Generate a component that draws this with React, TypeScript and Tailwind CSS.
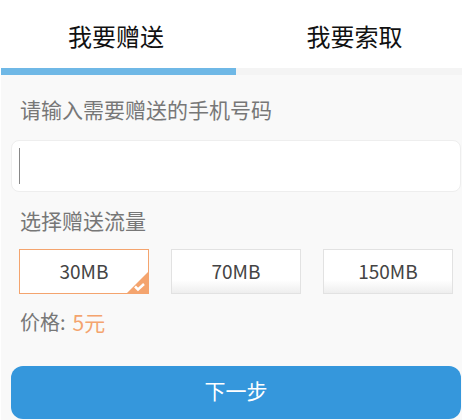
const font = { fontFamily: '"Noto Sans CJK SC", sans-serif' };

const plans = ['30MB', '70MB', '150MB'];

function PlanBox({ label, active }: { label: string; active: boolean }) {
  return (
    <div
      className={`relative flex h-[45px] w-[130px] items-center justify-center border text-[19px] text-[#444] ${
        active
          ? 'border-[#f4a46e] bg-white'
          : 'border-[#e2e2e2] bg-gradient-to-b from-white from-70% to-[#eeeeee]'
      }`}
    >
      {label}
      {active && (
        <svg className="absolute bottom-0 right-0 h-[21px] w-[21px]" viewBox="0 0 21 21">
          <polygon points="21,0 21,21 0,21" fill="#f4a46e" />
          <path d="M8 14.5l3 3 6-5.5" fill="none" stroke="#fff" strokeWidth="2.5" />
        </svg>
      )}
    </div>
  );
}

export default function App() {
  return (
    <div className="h-[420px] w-[466px] overflow-hidden bg-white pl-px pr-[4px]" style={font}>
      {/* Tabs */}
      <div className="flex h-[68px] items-center pt-[4px] text-[24px] text-[#111]">
        <div className="w-[235px] pr-[5px] text-center">我要赠送</div>
        <div className="flex-1 pl-[11px] text-center">我要索取</div>
      </div>
      <div className="flex h-[7px] bg-[#f4f4f4]">
        <div className="w-[235px] bg-[#6fb8e6]" />
      </div>

      <div className="h-[345px] bg-[#f9f9f9]">
        <div className="pl-[19px] pt-[19px] text-[21px] leading-[30px] text-[#777]">请输入需要赠送的手机号码</div>

        {/* Phone input */}
        <div className="ml-[10px] mr-px mt-[16px] flex h-[52px] items-center rounded-lg border border-[#eeeeee] bg-white pl-[7px]">
          <div className="h-[36px] w-px bg-[#888]" />
        </div>

        <div className="pl-[19px] pt-[13px] text-[21px] leading-[30px] text-[#777]">选择赠送流量</div>

        {/* Plans */}
        <div className="ml-[18px] mt-[14px] flex gap-[22px]">
          {plans.map((p, i) => (
            <PlanBox key={p} label={p} active={i === 0} />
          ))}
        </div>

        <div className="flex gap-[7px] pl-[19px] pt-[13px] text-[20px] leading-[30px] text-[#777]">
          <span>价格:</span>
          <span className="text-[21px] text-[#f4a46e]">5元</span>
        </div>

        <button className="ml-[10px] mt-[29px] flex h-[53px] w-[450px] items-center justify-center rounded-xl bg-[#3597dc] pb-[3px] text-[21px] text-white">
          下一步
        </button>
      </div>
    </div>
  );
}
